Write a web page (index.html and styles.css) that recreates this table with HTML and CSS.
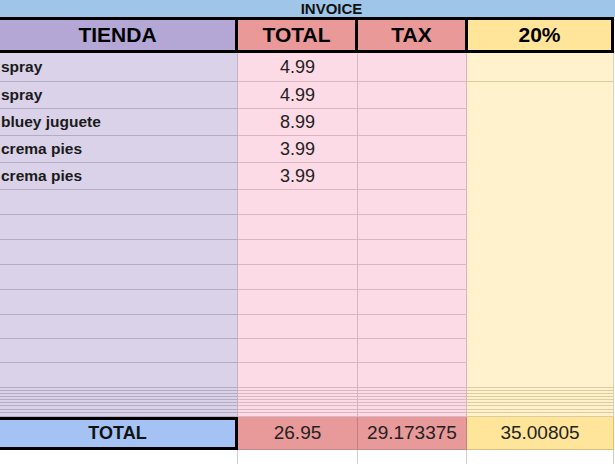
FILE: index.html
```html
<!DOCTYPE html>
<html>
<head>
<meta charset="utf-8">
<link rel="stylesheet" href="styles.css">
</head>
<body>
<div class="sheet">
  <div class="title">INVOICE</div>
  <div class="header">
    <div class="hcell h-purple">TIENDA</div>
    <div class="hcell h-red h-total">TOTAL</div>
    <div class="hcell h-red h-tax">TAX</div>
    <div class="hcell h-yellow">20%</div>
  </div>
  <div class="grid">
    <div class="c y merged"></div>

    <div class="c p lbl">spray</div><div class="c k num">4.99</div><div class="c k"></div><div class="c y"></div>
    <div class="c p lbl">spray</div><div class="c k num">4.99</div><div class="c k"></div>
    <div class="c p lbl">bluey juguete</div><div class="c k num">8.99</div><div class="c k"></div>
    <div class="c p lbl">crema pies</div><div class="c k num">3.99</div><div class="c k"></div>
    <div class="c p lbl">crema pies</div><div class="c k num">3.99</div><div class="c k"></div>
    <div class="c p"></div><div class="c k"></div><div class="c k"></div>
    <div class="c p"></div><div class="c k"></div><div class="c k"></div>
    <div class="c p"></div><div class="c k"></div><div class="c k"></div>
    <div class="c p"></div><div class="c k"></div><div class="c k"></div>
    <div class="c p"></div><div class="c k"></div><div class="c k"></div>
    <div class="c p"></div><div class="c k"></div><div class="c k"></div>
    <div class="c p"></div><div class="c k"></div><div class="c k"></div>
    <div class="c p"></div><div class="c k"></div><div class="c k"></div>

    <div class="c p"></div><div class="c k"></div><div class="c k"></div><div class="c y"></div>
    <div class="c p"></div><div class="c k"></div><div class="c k"></div><div class="c y"></div>
    <div class="c p"></div><div class="c k"></div><div class="c k"></div><div class="c y"></div>
    <div class="c p"></div><div class="c k"></div><div class="c k"></div><div class="c y"></div>
    <div class="c p"></div><div class="c k"></div><div class="c k"></div><div class="c y"></div>
    <div class="c p"></div><div class="c k"></div><div class="c k"></div><div class="c y"></div>
    <div class="c p"></div><div class="c k"></div><div class="c k"></div><div class="c y"></div>
    <div class="c p"></div><div class="c k"></div><div class="c k"></div><div class="c y"></div>
    <div class="c p"></div><div class="c k"></div><div class="c k"></div><div class="c y"></div>

    <div class="t-label">TOTAL</div><div class="c t-red tnum">26.95</div><div class="c t-red tnum">29.173375</div><div class="c t-yellow tnum">35.00805</div>

    <div class="c w"></div><div class="c w"></div><div class="c w"></div><div class="c w"></div>
  </div>
</div>
</body>
</html>
```

FILE: styles.css
```css
html, body {
  margin: 0;
  padding: 0;
  background: #ffffff;
}

.sheet {
  width: 615px;
  height: 464px;
  overflow: hidden;
  font-family: "Liberation Sans", Arial, sans-serif;
  color: #1a1a1a;
}

.title {
  height: 17px;
  line-height: 17px;
  background: #9fc5e8;
  font-weight: bold;
  font-size: 15px;
  text-align: center;
  padding-left: 48px;
  color: #111;
}

.header {
  display: flex;
  height: 36px;
}

.hcell {
  box-sizing: border-box;
  border-top: 3px solid #000;
  border-bottom: 3px solid #000;
  border-right: 3px solid #000;
  display: flex;
  align-items: center;
  justify-content: center;
  font-weight: bold;
  font-size: 21px;
  color: #000;
}

.h-purple { width: 238px; background: #b4a7d6; }
.h-red { background: #ea9999; }
.h-total { width: 120px; }
.h-tax { width: 110px; }
.h-yellow { width: 146px; background: #ffe599; }

.grid {
  display: grid;
  grid-template-columns: 238px 120px 109px 147px;
  grid-template-rows:
    29px 27px 27px 27px 27px
    25px 25px 25px 25px 25px 24px 24px 25px
    3px 3px 3px 3px 3px 3px 4px 3px 4px
    33px 20px;
}

.c {
  box-sizing: border-box;
  border-right: 1px solid rgba(60, 40, 60, 0.22);
  border-bottom: 1px solid rgba(60, 40, 60, 0.22);
  display: flex;
  align-items: center;
  min-height: 0;
  overflow: hidden;
}

.p { background: #d9d2e9; border-bottom-color: #b3acc3; border-right-color: #bdb5cb; }
.k { background: #fcdbe6; border-bottom-color: #d8b6c2; border-right-color: #d3b6c0; }
.y { background: #fff2cc; border-bottom-color: #ddcc9e; border-right-color: #d8d0c0; }
.w { background: #ffffff; border-bottom: none; border-right-color: #cfcfcf; }

.merged {
  grid-column: 4;
  grid-row: 2 / span 12;
}

.lbl {
  font-weight: bold;
  font-size: 15.5px;
  padding-left: 1px;
  color: #1a1a1a;
}

.num {
  justify-content: center;
  font-size: 18px;
  color: #222;
}

.t-label {
  box-sizing: border-box;
  background: #a4c2f4;
  border-top: 3px solid #000;
  border-bottom: 3px solid #000;
  border-right: 3px solid #000;
  display: flex;
  align-items: center;
  justify-content: center;
  font-weight: bold;
  font-size: 18px;
  color: #111;
}

.t-red { background: #e89999; border-right-color: #c48080; border-bottom-color: #c48a8a; }
.t-yellow { background: #ffe599; border-right-color: #d8c27a; border-bottom-color: #d8c27a; }

.tnum {
  justify-content: center;
  font-size: 19px;
  color: #222;
}
```
